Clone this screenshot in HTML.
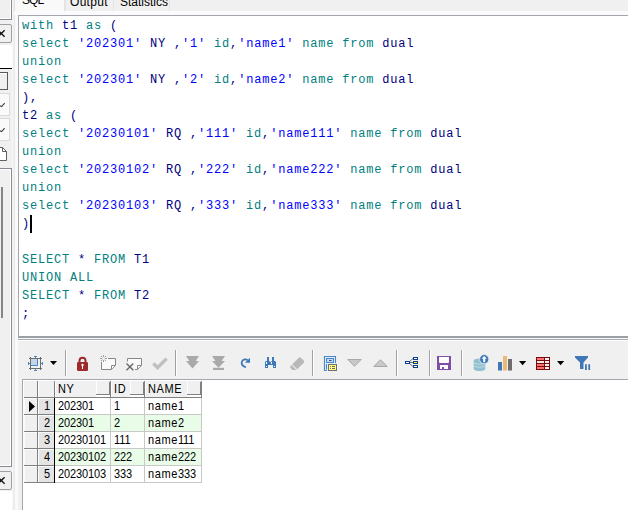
<!DOCTYPE html>
<html><head><meta charset="utf-8">
<style>
*{margin:0;padding:0;box-sizing:border-box}
html,body{width:628px;height:510px;overflow:hidden;background:#f0f0f0;position:relative;font-family:"Liberation Sans",sans-serif}
.a{position:absolute}
/* editor */
#ed{position:absolute;left:18px;top:15px;width:620px;height:323px;background:#fff;border:1px solid #a2a6ad;border-bottom:2px solid #9b9fa6;border-right:none}
.code{position:absolute;left:3px;top:0.5px;font-family:"Liberation Mono",monospace;font-size:12px;letter-spacing:0.8px;line-height:18px;white-space:pre;color:#000080}
.k{color:#008080}.s{color:#0000ff}.i{color:#000080}
/* grid */

.gt{position:absolute;font-size:11px;letter-spacing:0.6px;line-height:15px;color:#000;white-space:pre;transform:scaleY(1.12);transform-origin:0 11px}.d{letter-spacing:-0.1px}
</style></head><body>

<!-- splitter light strip -->
<div class="a" style="left:12px;top:0;width:1px;height:510px;background:#f6f6f6"></div>
<div class="a" style="left:14px;top:0;width:1px;height:510px;background:#e9e9e9"></div>
<div class="a" style="left:15px;top:0;width:3px;height:510px;background:#fafafa"></div>
<!-- left strip -->
<div class="a" style="left:-2px;top:-2px;width:14px;height:22px;background:#f0f0f0;border-right:1px solid #858a93;border-bottom:1px solid #858a93;box-shadow:inset -1px -1px 0 #fff"></div>
<div class="a" style="left:-3px;top:24px;width:15px;height:19px;background:#f0f0f0;border:1px solid #a0a0a0;border-radius:2px"></div>
<div class="a" style="left:0;top:45px;width:12px;height:23px;background:#fff"></div>
<div class="a" style="left:0;top:68px;width:12px;height:1px;background:#000"></div>
<div class="a" style="left:-2px;top:72px;width:10px;height:18px;background:#f0f0f0;border:1px solid #5a5a5a;box-shadow:inset 1px 1px 0 #fff"></div>
<div class="a" style="left:-2px;top:93px;width:12px;height:23px;background:#fafafa;border:1px solid #dadada"></div>
<div class="a" style="left:-2px;top:118px;width:12px;height:23px;background:#fafafa;border:1px solid #dadada"></div>
<div class="a" style="left:-2px;top:168px;width:14px;height:299px;background:#f0f0f0;border:1px solid #858a93;box-shadow:inset 1px 1px 0 #fff,inset -1px -1px 0 #fff"></div>
<div class="a" style="left:1px;top:187px;width:2px;height:131px;background:#868686"></div>
<div class="a" style="left:-3px;top:471px;width:15px;height:19px;background:#f0f0f0;border:1px solid #a0a0a0;border-radius:2px"></div>
<div class="a" style="left:0;top:491px;width:12px;height:19px;background:#fff"></div>
<svg class="a" style="left:0;top:0" width="20" height="510">
<path d="M-2 30.3L4.6 36.7M-2 36.7L4.6 30.3" stroke="#111" stroke-width="1.3"/>
<path d="M-2 477.3L4.6 483.7M-2 483.7L4.6 477.3" stroke="#111" stroke-width="1.3"/>
<path d="M0 105.8L1.6 106.6L4.7 103.2" stroke="#454545" stroke-width="1.2" fill="none"/>
<path d="M0 130.8L1.6 131.6L4.7 128.2" stroke="#454545" stroke-width="1.2" fill="none"/>
<path d="M-1 147.5H2.5L6.5 151.5V160.5H-1" stroke="#606060" stroke-width="1" fill="#fff"/>
<path d="M2.5 147.5V151.5H6.5" stroke="#606060" stroke-width="1" fill="none"/>
</svg>
<!-- tabs -->
<div class="a" style="left:14px;top:0;width:51px;height:15px;background:#f9f9f9;border-left:1px solid #e3e3e3;border-right:1px solid #e3e3e3"></div>
<div class="a" style="left:65px;top:-2px;width:49px;height:14px;background:#f0f0f0;border:1px solid #e3e3e3;border-top:none"></div>
<div class="a" style="left:113px;top:-2px;width:57px;height:14px;background:#f0f0f0;border:1px solid #e3e3e3;border-top:none"></div>
<div class="a" style="left:14px;top:11px;width:614px;height:4px;background:#fbfbfb"></div>
<div class="a" style="left:22px;top:-7px;font-size:12px;letter-spacing:-0.9px;color:#000">SQL</div>
<div class="a" style="left:70px;top:-5px;font-size:12px;letter-spacing:0.3px;color:#000">Output</div>
<div class="a" style="left:120px;top:-5px;font-size:12px;color:#000">Statistics</div>

<!-- editor -->
<div id="ed">
<div class="code"><span class="k">with</span> t1 <span class="k">as</span> (
<span class="k">select</span> <span class="s">'202301'</span> NY ,<span class="s">'1'</span> <span class="k">id</span>,<span class="s">'name1'</span> <span class="k">name</span> <span class="k">from</span> dual
<span class="k">union</span>
<span class="k">select</span> <span class="s">'202301'</span> NY ,<span class="s">'2'</span> <span class="k">id</span>,<span class="s">'name2'</span> <span class="k">name</span> <span class="k">from</span> dual
),
t2 <span class="k">as</span> (
<span class="k">select</span> <span class="s">'20230101'</span> RQ ,<span class="s">'111'</span> <span class="k">id</span>,<span class="s">'name111'</span> <span class="k">name</span> <span class="k">from</span> dual
<span class="k">union</span>
<span class="k">select</span> <span class="s">'20230102'</span> RQ ,<span class="s">'222'</span> <span class="k">id</span>,<span class="s">'name222'</span> <span class="k">name</span> <span class="k">from</span> dual
<span class="k">union</span>
<span class="k">select</span> <span class="s">'20230103'</span> RQ ,<span class="s">'333'</span> <span class="k">id</span>,<span class="s">'name333'</span> <span class="k">name</span> <span class="k">from</span> dual
)

<span class="k">SELECT</span> * <span class="k">FROM</span> T1
<span class="k">UNION</span> <span class="k">ALL</span>
<span class="k">SELECT</span> * <span class="k">FROM</span> T2
;</div>
<div class="a" style="left:11px;top:199px;width:2px;height:18px;background:#000"></div>
</div>
<div class="a" style="left:18px;top:338px;width:610px;height:1px;background:#fafafa"></div>
<div class="a" style="left:18px;top:339px;width:610px;height:1px;background:#a8acb3"></div>
<div class="a" style="left:18px;top:340px;width:610px;height:1px;background:#fdfdfd"></div>

<!-- toolbar placeholder -->
<svg class="a" style="left:0;top:0" width="628" height="510" viewBox="0 0 628 510" shape-rendering="auto">
<!-- crop icon -->
<g>
<rect x="31" y="359" width="7" height="7" fill="#c5d5e6"/>
<path d="M37.5 359V365.5H31" stroke="#4a86c8" stroke-width="1" fill="none"/>
<path d="M29 358.5H42M29 368.5H42M30.5 357V370M40.5 357V370" stroke="#6e6e6e" stroke-width="1" fill="none"/>
<path d="M34 356.5H37M35.5 356V358M34 370.5H37M35.5 369V371M28.5 362V365M28 363.5H30M42.5 362V365M41 363.5H43" stroke="#4a86c8" stroke-width="1" fill="none"/>
</g>
<path d="M50 361H57L53.5 365Z" fill="#000"/>
<!-- separators -->
<g fill="#a0a0a0">
<rect x="65" y="350" width="1" height="26"/><rect x="175" y="350" width="1" height="26"/>
<rect x="312" y="350" width="1" height="26"/><rect x="396" y="350" width="1" height="26"/>
<rect x="429" y="350" width="1" height="26"/><rect x="461" y="350" width="1" height="26"/>
</g>
<g fill="#fff">
<rect x="66" y="350" width="1" height="26"/><rect x="176" y="350" width="1" height="26"/>
<rect x="313" y="350" width="1" height="26"/><rect x="397" y="350" width="1" height="26"/>
<rect x="430" y="350" width="1" height="26"/><rect x="462" y="350" width="1" height="26"/>
</g>
<!-- lock -->
<path d="M79.5 362.5V360.8A3 3 0 0 1 85.5 360.8V362.5" stroke="#9e2a2b" stroke-width="2" fill="none"/>
<rect x="77" y="362" width="11" height="9" rx="1.2" fill="#9e2a2b"/>
<circle cx="82.5" cy="365" r="1.2" fill="#fff"/><rect x="82" y="365" width="1" height="4" fill="#fff"/>
<!-- new record -->
<path d="M101.5 362V369.5H111.5L115.5 365.5V358.5H108" stroke="#888" stroke-width="1" fill="#fbfbfb"/>
<path d="M111.5 369V365.5H115" stroke="#888" stroke-width="1" fill="#fff"/>
<g stroke="#a0a0a0" stroke-width="1"><path d="M100 358.5H102M105 358.5H107M103.5 355V357M103.5 360V362M101 356L102.3 357.3M104.7 359.7L106 361M106 356L104.7 357.3M102.3 359.7L101 361"/></g>
<!-- delete record -->
<path d="M127.5 361.5V358.5H141.5V365.5L137.5 369.5H135" stroke="#888" stroke-width="1" fill="#fbfbfb"/>
<path d="M137.5 369V365.5H141" stroke="#888" stroke-width="1" fill="#fff"/>
<path d="M126.5 363.5L133.3 370.3M126.5 370.3L133.3 363.5" stroke="#6a6a6a" stroke-width="1.4"/>
<!-- check -->
<path d="M153.4 363.6L157.6 367.6L166.6 358.6" stroke="#bfbfbf" stroke-width="3.4" fill="none"/>
<!-- double down -->
<path d="M186 356H199L195.6 361H199L192.5 368.6L186 361H189.4Z" fill="#a9a9a9"/>
<path d="M212 356H225L221.6 361H225L218.5 367.8L212 361H215.4Z" fill="#a9a9a9"/>
<rect x="213" y="367.8" width="11" height="2.2" fill="#a9a9a9"/>
<!-- refresh -->
<path d="M247.6 360.2A3.6 3.6 0 1 0 244 366.3L245.8 367.6" stroke="#3d78b8" stroke-width="1.8" fill="none"/>
<path d="M250 357.8V362.8H245Z" fill="#3d78b8"/>
<!-- binoculars -->
<g fill="#3d78b8"><rect x="267" y="357" width="2" height="4"/><rect x="272" y="357" width="2" height="4"/>
<path d="M266 361H269L270.5 362L272 361H275L276 362V368H273V365H268V368H265V362Z"/></g>
<g fill="#fff"><rect x="266" y="362" width="1" height="2"/><rect x="271" y="362" width="1" height="2"/><rect x="266" y="366" width="1" height="1"/><rect x="274" y="366" width="1" height="1"/></g>
<!-- eraser -->
<path d="M290.5 366L298.8 357.7Q299.8 356.8 300.8 357.7L303.8 360.7Q304.7 361.7 303.8 362.7L296.5 370H292.5L290.5 368Q289.8 367 290.5 366Z" fill="#b8b8b8"/>
<path d="M291.8 364.6L296.8 369.6" stroke="#f0f0f0" stroke-width="1.1"/>
<!-- form -->
<rect x="325" y="357" width="10" height="13" fill="#e4eefa"/>
<path d="M326.8 370.5H324.5V356.5H335.5V363" stroke="#4a86c8" stroke-width="1.1" fill="none"/>
<path d="M326.5 364V369.5" stroke="#4a86c8" stroke-width="1" fill="none"/>
<rect x="326.5" y="358.5" width="7" height="4" fill="#c8d8ec" stroke="#4a86c8" stroke-width="1"/>
<rect x="329" y="360" width="2.6" height="1" fill="#2a5a9a"/>
<rect x="328.5" y="364.5" width="8" height="6" fill="#ffff80" stroke="#6e6e6e" stroke-width="1"/>
<g fill="#6a6a6a"><rect x="330" y="366" width="1" height="1"/><rect x="332" y="366" width="3" height="1"/><rect x="330" y="368" width="1" height="1"/><rect x="332" y="368" width="3" height="1"/></g>
<!-- triangles -->
<path d="M347.8 359.5H361.2L354.5 366.3Z" fill="#c8c8c8" stroke="#a8a8a8" stroke-width="1"/>
<path d="M373.8 366.5H387.2L380.5 359.7Z" fill="#c8c8c8" stroke="#a8a8a8" stroke-width="1"/>
<!-- tree -->
<path d="M410 362.5H413M409.5 361.5L413 358.5M409.5 363.5L413 366.5" stroke="#606060" stroke-width="0.9" fill="none"/>
<rect x="405.5" y="361.5" width="4" height="2" fill="#fff" stroke="#0a3c8c" stroke-width="1"/>
<rect x="413.5" y="357.5" width="4" height="2" fill="#fff" stroke="#0a3c8c" stroke-width="1"/>
<rect x="413.5" y="361.5" width="4" height="2" fill="#ffff00" stroke="#0a3c8c" stroke-width="1"/>
<rect x="413.5" y="365.5" width="4" height="2" fill="#fff" stroke="#0a3c8c" stroke-width="1"/>
<!-- save -->
<rect x="437" y="356" width="14" height="14" fill="#7d4fa8"/>
<path d="M439 357H449V362Q449 363 448 363H440Q439 363 439 362Z" fill="#fff"/>
<rect x="440" y="365" width="8" height="4" fill="#fff"/>
<rect x="442" y="367" width="2" height="2" fill="#7d4fa8"/>
<!-- db upload -->
<g fill="#92c2d0">
<ellipse cx="479.5" cy="360.5" rx="5.8" ry="2"/>
<rect x="473.7" y="360.5" width="11.6" height="8.5"/>
<ellipse cx="479.5" cy="369" rx="5.8" ry="2"/>
</g>
<path d="M474 363.3Q479.5 365.3 485 363.3M474 366.3Q479.5 368.3 485 366.3" stroke="#c8e0e8" stroke-width="0.8" fill="none"/>
<circle cx="484.2" cy="359.2" r="4.6" fill="#3d78b8" stroke="#f0f0f0" stroke-width="0.8"/>
<path d="M484.2 356L481.6 358.8H483.2V362.2H485.2V358.8H486.8Z" fill="#fff"/>
<!-- bars -->
<rect x="498" y="362" width="4" height="8.5" fill="#3f78b4"/>
<rect x="503" y="356" width="4" height="14.5" fill="#e8bc78"/>
<rect x="508" y="359" width="4" height="11.5" fill="#6e6e6e"/>
<path d="M519 361H526.2L522.6 365.3Z" fill="#000"/>
<!-- table -->
<rect x="536" y="357" width="14" height="13" fill="#7a0a0a"/>
<rect x="537" y="358" width="7" height="2" fill="#ff7070"/><rect x="545" y="358" width="4" height="2" fill="#f2f2f2"/>
<rect x="537" y="361" width="7" height="2" fill="#ececec"/><rect x="545" y="361" width="4" height="2" fill="#f2f2f2"/>
<rect x="537" y="364" width="7" height="2" fill="#ff7070"/><rect x="545" y="364" width="4" height="2" fill="#f2f2f2"/>
<rect x="537" y="367" width="7" height="2" fill="#ff7070"/><rect x="545" y="367" width="4" height="2" fill="#f2f2f2"/>
<path d="M557 361H564.2L560.6 365.3Z" fill="#000"/>
<!-- filter -->
<path d="M575 356H588V357.5L583.5 362.5V369H580V362.5L575 357.5Z" fill="#3f78b4"/>
<rect x="585" y="364.2" width="1.8" height="5.8" fill="#3f78b4"/><rect x="588.3" y="364.2" width="1.8" height="5.8" fill="#3f78b4"/>
</svg>

<!-- grid -->
<div class="a" style="left:23px;top:380px;width:605px;height:130px;background:#fff"></div>
<div class="a" style="left:22px;top:379px;width:606px;height:1px;background:#a3a7ae"></div>
<div class="a" style="left:22px;top:379px;width:1px;height:131px;background:#a3a7ae"></div>
<div class="a" style="left:23px;top:380px;width:14px;height:17px;background:#fff"></div>
<div class="a" style="left:24px;top:381px;width:13px;height:16px;background:#f0f0f0"></div>
<div class="a" style="left:37px;top:381px;width:1px;height:17px;background:#808080"></div>
<div class="a" style="left:38px;top:380px;width:16px;height:17px;background:#fff"></div>
<div class="a" style="left:39px;top:381px;width:15px;height:16px;background:#f0f0f0"></div>
<div class="a" style="left:54px;top:381px;width:1px;height:17px;background:#808080"></div>
<div class="a" style="left:55px;top:380px;width:55px;height:17px;background:#fff"></div>
<div class="a" style="left:56px;top:381px;width:54px;height:16px;background:#f0f0f0"></div>
<div class="a" style="left:110px;top:381px;width:1px;height:17px;background:#808080"></div>
<div class="a" style="left:111px;top:380px;width:33px;height:17px;background:#fff"></div>
<div class="a" style="left:112px;top:381px;width:32px;height:16px;background:#f0f0f0"></div>
<div class="a" style="left:144px;top:381px;width:1px;height:17px;background:#808080"></div>
<div class="a" style="left:145px;top:380px;width:56px;height:17px;background:#fff"></div>
<div class="a" style="left:146px;top:381px;width:55px;height:16px;background:#f0f0f0"></div>
<div class="a" style="left:201px;top:381px;width:1px;height:17px;background:#808080"></div>
<div class="a" style="left:24px;top:397px;width:178px;height:1px;background:#808080"></div>
<div class="a" style="left:96px;top:381px;width:1px;height:14px;background:#fff"></div>
<div class="a" style="left:96px;top:394px;width:14px;height:1px;background:#808080"></div>
<div class="a" style="left:109px;top:382px;width:1px;height:13px;background:#808080"></div>
<div class="a" style="left:96px;top:395px;width:14px;height:2px;background:#fff"></div>
<div class="a" style="left:130px;top:381px;width:1px;height:14px;background:#fff"></div>
<div class="a" style="left:130px;top:394px;width:14px;height:1px;background:#808080"></div>
<div class="a" style="left:143px;top:382px;width:1px;height:13px;background:#808080"></div>
<div class="a" style="left:130px;top:395px;width:14px;height:2px;background:#fff"></div>
<div class="a" style="left:187px;top:381px;width:1px;height:14px;background:#fff"></div>
<div class="a" style="left:187px;top:394px;width:14px;height:1px;background:#808080"></div>
<div class="a" style="left:200px;top:382px;width:1px;height:13px;background:#808080"></div>
<div class="a" style="left:187px;top:395px;width:14px;height:2px;background:#fff"></div>
<div class="gt" style="left:58px;top:382px;">NY</div>
<div class="gt" style="left:114px;top:382px;">ID</div>
<div class="gt" style="left:148px;top:382px;">NAME</div>
<div class="a" style="left:23px;top:398px;width:14px;height:16px;background:#f0f0f0"></div><div class="a" style="left:24px;top:398px;width:13px;height:1px;background:#fbfbfb"></div><div class="a" style="left:24px;top:398px;width:1px;height:16px;background:#fbfbfb"></div>
<div class="a" style="left:23px;top:398px;width:1px;height:16px;background:#fdfdfd"></div>
<div class="a" style="left:24px;top:414px;width:13px;height:1px;background:#808080"></div>
<div class="a" style="left:37px;top:398px;width:1px;height:17px;background:#808080"></div>
<div class="a" style="left:38px;top:398px;width:16px;height:16px;background:#e4e4e4"></div>
<div class="a" style="left:38px;top:398px;width:1px;height:16px;background:#fdfdfd"></div>
<div class="a" style="left:38px;top:398px;width:16px;height:1px;background:#fafafa"></div>
<div class="a" style="left:38px;top:414px;width:16px;height:1px;background:#808080"></div>
<div class="a" style="left:54px;top:398px;width:1px;height:17px;background:#000"></div>
<div class="a" style="left:55px;top:398px;width:146px;height:16px;background:#fff"></div>
<div class="a" style="left:55px;top:414px;width:147px;height:1px;background:#c8c8c8"></div>
<div class="a" style="left:110px;top:398px;width:1px;height:17px;background:#c8c8c8"></div>
<div class="a" style="left:144px;top:398px;width:1px;height:17px;background:#c8c8c8"></div>
<div class="a" style="left:201px;top:398px;width:1px;height:17px;background:#c8c8c8"></div>
<div class="gt" style="left:58px;top:399px;"><span class="d">202301</span></div>
<div class="gt" style="left:114px;top:399px;"><span class="d">1</span></div>
<div class="gt" style="left:148px;top:399px;">name<span class="d">1</span></div>
<div class="gt" style="left:38px;top:399px;width:12px;text-align:right"><span class="d">1</span></div>
<div class="a" style="left:23px;top:415px;width:14px;height:16px;background:#f0f0f0"></div><div class="a" style="left:24px;top:415px;width:13px;height:1px;background:#fbfbfb"></div><div class="a" style="left:24px;top:415px;width:1px;height:16px;background:#fbfbfb"></div>
<div class="a" style="left:23px;top:415px;width:1px;height:16px;background:#fdfdfd"></div>
<div class="a" style="left:24px;top:431px;width:13px;height:1px;background:#808080"></div>
<div class="a" style="left:37px;top:415px;width:1px;height:17px;background:#808080"></div>
<div class="a" style="left:38px;top:415px;width:16px;height:16px;background:#e4e4e4"></div>
<div class="a" style="left:38px;top:415px;width:1px;height:16px;background:#fdfdfd"></div>
<div class="a" style="left:38px;top:415px;width:16px;height:1px;background:#fafafa"></div>
<div class="a" style="left:38px;top:431px;width:16px;height:1px;background:#808080"></div>
<div class="a" style="left:54px;top:415px;width:1px;height:17px;background:#000"></div>
<div class="a" style="left:55px;top:415px;width:146px;height:16px;background:#e8fce8"></div>
<div class="a" style="left:55px;top:431px;width:147px;height:1px;background:#c8c8c8"></div>
<div class="a" style="left:110px;top:415px;width:1px;height:17px;background:#c8c8c8"></div>
<div class="a" style="left:144px;top:415px;width:1px;height:17px;background:#c8c8c8"></div>
<div class="a" style="left:201px;top:415px;width:1px;height:17px;background:#c8c8c8"></div>
<div class="gt" style="left:58px;top:416px;"><span class="d">202301</span></div>
<div class="gt" style="left:114px;top:416px;"><span class="d">2</span></div>
<div class="gt" style="left:148px;top:416px;">name<span class="d">2</span></div>
<div class="gt" style="left:38px;top:416px;width:12px;text-align:right"><span class="d">2</span></div>
<div class="a" style="left:23px;top:432px;width:14px;height:16px;background:#f0f0f0"></div><div class="a" style="left:24px;top:432px;width:13px;height:1px;background:#fbfbfb"></div><div class="a" style="left:24px;top:432px;width:1px;height:16px;background:#fbfbfb"></div>
<div class="a" style="left:23px;top:432px;width:1px;height:16px;background:#fdfdfd"></div>
<div class="a" style="left:24px;top:448px;width:13px;height:1px;background:#808080"></div>
<div class="a" style="left:37px;top:432px;width:1px;height:17px;background:#808080"></div>
<div class="a" style="left:38px;top:432px;width:16px;height:16px;background:#e4e4e4"></div>
<div class="a" style="left:38px;top:432px;width:1px;height:16px;background:#fdfdfd"></div>
<div class="a" style="left:38px;top:432px;width:16px;height:1px;background:#fafafa"></div>
<div class="a" style="left:38px;top:448px;width:16px;height:1px;background:#808080"></div>
<div class="a" style="left:54px;top:432px;width:1px;height:17px;background:#000"></div>
<div class="a" style="left:55px;top:432px;width:146px;height:16px;background:#fff"></div>
<div class="a" style="left:55px;top:448px;width:147px;height:1px;background:#c8c8c8"></div>
<div class="a" style="left:110px;top:432px;width:1px;height:17px;background:#c8c8c8"></div>
<div class="a" style="left:144px;top:432px;width:1px;height:17px;background:#c8c8c8"></div>
<div class="a" style="left:201px;top:432px;width:1px;height:17px;background:#c8c8c8"></div>
<div class="gt" style="left:58px;top:433px;"><span class="d">20230101</span></div>
<div class="gt" style="left:114px;top:433px;"><span class="d">111</span></div>
<div class="gt" style="left:148px;top:433px;">name<span class="d">111</span></div>
<div class="gt" style="left:38px;top:433px;width:12px;text-align:right"><span class="d">3</span></div>
<div class="a" style="left:23px;top:449px;width:14px;height:16px;background:#f0f0f0"></div><div class="a" style="left:24px;top:449px;width:13px;height:1px;background:#fbfbfb"></div><div class="a" style="left:24px;top:449px;width:1px;height:16px;background:#fbfbfb"></div>
<div class="a" style="left:23px;top:449px;width:1px;height:16px;background:#fdfdfd"></div>
<div class="a" style="left:24px;top:465px;width:13px;height:1px;background:#808080"></div>
<div class="a" style="left:37px;top:449px;width:1px;height:17px;background:#808080"></div>
<div class="a" style="left:38px;top:449px;width:16px;height:16px;background:#e4e4e4"></div>
<div class="a" style="left:38px;top:449px;width:1px;height:16px;background:#fdfdfd"></div>
<div class="a" style="left:38px;top:449px;width:16px;height:1px;background:#fafafa"></div>
<div class="a" style="left:38px;top:465px;width:16px;height:1px;background:#808080"></div>
<div class="a" style="left:54px;top:449px;width:1px;height:17px;background:#000"></div>
<div class="a" style="left:55px;top:449px;width:146px;height:16px;background:#e8fce8"></div>
<div class="a" style="left:55px;top:465px;width:147px;height:1px;background:#c8c8c8"></div>
<div class="a" style="left:110px;top:449px;width:1px;height:17px;background:#c8c8c8"></div>
<div class="a" style="left:144px;top:449px;width:1px;height:17px;background:#c8c8c8"></div>
<div class="a" style="left:201px;top:449px;width:1px;height:17px;background:#c8c8c8"></div>
<div class="gt" style="left:58px;top:450px;"><span class="d">20230102</span></div>
<div class="gt" style="left:114px;top:450px;"><span class="d">222</span></div>
<div class="gt" style="left:148px;top:450px;">name<span class="d">222</span></div>
<div class="gt" style="left:38px;top:450px;width:12px;text-align:right"><span class="d">4</span></div>
<div class="a" style="left:23px;top:466px;width:14px;height:16px;background:#f0f0f0"></div><div class="a" style="left:24px;top:466px;width:13px;height:1px;background:#fbfbfb"></div><div class="a" style="left:24px;top:466px;width:1px;height:16px;background:#fbfbfb"></div>
<div class="a" style="left:23px;top:466px;width:1px;height:16px;background:#fdfdfd"></div>
<div class="a" style="left:24px;top:482px;width:13px;height:1px;background:#808080"></div>
<div class="a" style="left:37px;top:466px;width:1px;height:17px;background:#808080"></div>
<div class="a" style="left:38px;top:466px;width:16px;height:16px;background:#e4e4e4"></div>
<div class="a" style="left:38px;top:466px;width:1px;height:16px;background:#fdfdfd"></div>
<div class="a" style="left:38px;top:466px;width:16px;height:1px;background:#fafafa"></div>
<div class="a" style="left:38px;top:482px;width:16px;height:1px;background:#808080"></div>
<div class="a" style="left:54px;top:466px;width:1px;height:17px;background:#000"></div>
<div class="a" style="left:55px;top:466px;width:146px;height:16px;background:#fff"></div>
<div class="a" style="left:55px;top:482px;width:147px;height:1px;background:#c8c8c8"></div>
<div class="a" style="left:110px;top:466px;width:1px;height:17px;background:#c8c8c8"></div>
<div class="a" style="left:144px;top:466px;width:1px;height:17px;background:#c8c8c8"></div>
<div class="a" style="left:201px;top:466px;width:1px;height:17px;background:#c8c8c8"></div>
<div class="gt" style="left:58px;top:467px;"><span class="d">20230103</span></div>
<div class="gt" style="left:114px;top:467px;"><span class="d">333</span></div>
<div class="gt" style="left:148px;top:467px;">name<span class="d">333</span></div>
<div class="gt" style="left:38px;top:467px;width:12px;text-align:right"><span class="d">5</span></div>
<svg class="a" style="left:0;top:0" width="628" height="510"><path d="M29 401V412L35 406.5Z" fill="#000"/></svg>

</body></html>
